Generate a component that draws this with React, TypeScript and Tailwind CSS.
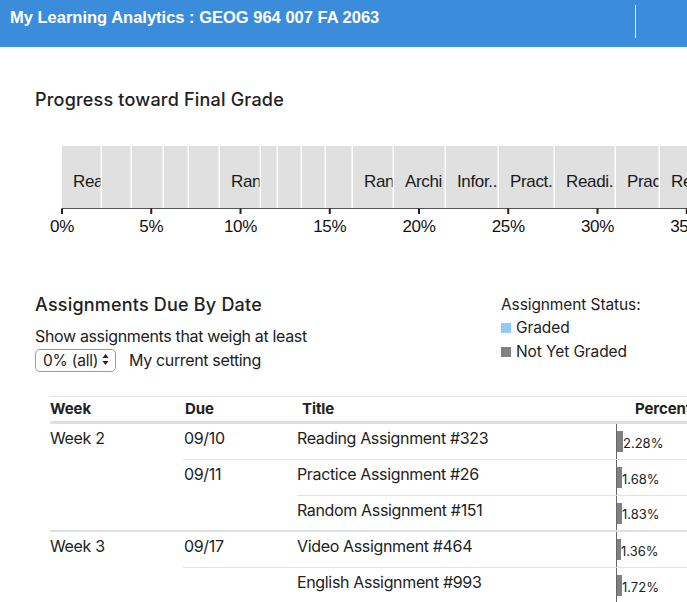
import React from "react";

const bounds = [62, 102, 132, 164, 189, 220, 261, 278, 302, 326, 353, 394, 446, 499, 555, 616, 660, 720];
const labels: Record<number, string> = {
  0: "Reading Assignment",
  5: "Random Assignment",
  10: "Random Assignment",
  11: "Archi",
  12: "Infor..",
  13: "Pract.",
  14: "Readi.",
  15: "Practice Assignment",
  16: "Reading Assignment",
};

function ProgressChart() {
  const ticks = [0, 5, 10, 15, 20, 25, 30, 35];
  return (
    <svg width={687} height={100} className="block" style={{ fontFamily: '"Liberation Sans", Arial, sans-serif' }}>
      <defs>
        {bounds.slice(0, -1).map((x, i) => (
          <clipPath id={`seg${i}`} key={i}>
            <rect x={x} y={0} width={bounds[i + 1] - x - 1.5} height={70} />
          </clipPath>
        ))}
      </defs>
      {bounds.slice(0, -1).map((x, i) => (
        <g key={i}>
          <rect x={x} y={5} width={bounds[i + 1] - x - 1.5} height={62} fill="#e0e0e0" />
          {labels[i] && (
            <text x={x + 11} y={46} fontSize={17} fill="#1a1a1a" clipPath={`url(#seg${i})`}>
              {labels[i]}
            </text>
          )}
        </g>
      ))}
      <line x1={62} x2={687} y1={67.5} y2={67.5} stroke="#555" strokeWidth={1.2} />
      {ticks.map((t) => {
        const x = 62 + t * 17.85;
        return (
          <g key={t}>
            <line x1={x} x2={x} y1={67.5} y2={73} stroke="#222" strokeWidth={2} />
            <text x={x} y={91} fontSize={17} textAnchor="middle" fill="#111">
              {t}%
            </text>
          </g>
        );
      })}
    </svg>
  );
}

type Row = { title: string; pct: number };
type DueGroup = { due: string; rows: Row[] };
type WeekGroup = { week: string; dues: DueGroup[] };

const data: WeekGroup[] = [
  {
    week: "Week 2",
    dues: [
      { due: "09/10", rows: [{ title: "Reading Assignment #323", pct: 2.28 }] },
      {
        due: "09/11",
        rows: [
          { title: "Practice Assignment #26", pct: 1.68 },
          { title: "Random Assignment #151", pct: 1.83 },
        ],
      },
    ],
  },
  {
    week: "Week 3",
    dues: [
      { due: "09/17", rows: [{ title: "Video Assignment #464", pct: 1.36 }] },
      { due: "", rows: [{ title: "English Assignment #993", pct: 1.72 }] },
    ],
  },
];

function Select() {
  return (
    <div className="relative w-[81px] h-[23px]">
      <select
        className="appearance-none w-full h-full border border-[#9a9a9a] rounded-[5px] bg-white pl-[7px] text-[15.5px] text-[#222] leading-[21px] outline-none tracking-[-0.2px]"
        defaultValue="0"
      >
        <option value="0">0% (all)</option>
      </select>
      <svg className="absolute right-[7px] top-[5px] pointer-events-none" width="7" height="13" viewBox="0 0 7 13">
        <path d="M0.5 5 L3.5 1 L6.5 5 Z" fill="#222" />
        <path d="M0.5 8 L3.5 12 L6.5 8 Z" fill="#222" />
      </svg>
    </div>
  );
}

export default function App() {
  const body = { fontFamily: 'Inter, "Noto Sans", sans-serif' };
  return (
    <div className="w-[687px] h-[602px] overflow-hidden bg-white text-[#212121] tracking-[-0.35px]" style={body}>
      <header className="h-[47px] bg-[#3b8ddb] flex items-start">
        <div
          className="pl-[10px] pt-[7px] text-white font-bold text-[16.5px] leading-[20px] tracking-normal"
          style={{ fontFamily: '"Liberation Sans", Arial, sans-serif' }}
        >
          My Learning Analytics : GEOG 964 007 FA 2063
        </div>
        <div className="ml-auto mr-[51px] mt-[5px] w-px h-[33px] bg-white/90" />
      </header>

      <div className="pl-[35px] pt-[42px] text-[18px] leading-[22px] font-medium text-[#222] tracking-[0.2px]">
        Progress toward Final Grade
      </div>
      <div className="mt-[30px]">
        <ProgressChart />
      </div>

      <div className="flex mt-[53px]">
        <div className="pl-[35px] w-[501px] shrink-0">
          <div className="text-[18px] leading-[22px] font-medium text-[#222] tracking-[0.2px]">Assignments Due By Date</div>
          <div className="mt-[10px] text-[16px] leading-[20px] text-[#222]">Show assignments that weigh at least</div>
          <div className="flex items-center gap-[13px] mt-[2px]">
            <Select />
            <span className="text-[16px] leading-[20px] text-[#222]">My current setting</span>
          </div>
        </div>
        <div className="text-[15.5px] leading-[24px] text-[#222] tracking-[-0.1px]">
          <div className="leading-[22px]">Assignment Status:</div>
          <div className="flex items-center gap-[5px]">
            <span className="w-[10px] h-[10px] bg-[#90caf9] inline-block" />
            Graded
          </div>
          <div className="flex items-center gap-[5px]">
            <span className="w-[10px] h-[10px] bg-[#808080] inline-block" />
            Not Yet Graded
          </div>
        </div>
      </div>

      <div className="ml-[50px] mt-[25px] w-[700px] border-t border-[#dfe2e6] text-[16px] text-[#222]">
        <div className="flex h-[27px] items-center font-bold text-[15px] border-b-[3px] border-[#dcdfe3] whitespace-nowrap tracking-[-0.1px] pt-[1px]">
          <div className="w-[133px] shrink-0">Week</div>
          <div className="w-[114px] shrink-0 pl-[2px]">Due</div>
          <div className="w-[319px] shrink-0 pl-[5px]">Title</div>
          <div className="pl-[19px] shrink-0">Percent of Final Grade</div>
        </div>
        {data.map((wg, wi) => (
          <div key={wi} className={`flex ${wi > 0 ? "border-t-2 border-[#dcdfe3]" : ""}`}>
            <div className="w-[133px] shrink-0 pt-[4px] leading-[20px]">{wg.week}</div>
            <div className="flex-1">
              {wg.dues.map((dg, di) => (
                <div key={di} className={`flex ${di > 0 ? "border-t border-[#dfe2e6]" : ""}`}>
                  <div className="w-[114px] shrink-0 pt-[4px] pl-[1px] leading-[20px]">{dg.due}</div>
                  <div className="flex-1">
                    {dg.rows.map((r, ri) => (
                      <div key={ri} className={`flex h-[35px] ${ri > 0 ? "border-t border-[#dfe2e6]" : ""}`}>
                        <div className="w-[319px] shrink-0 pt-[4px] leading-[20px]">{r.title}</div>
                        <div className="border-l border-[#666] flex items-center h-full">
                          <div className="h-[21px] bg-[#808080]" style={{ width: `${Math.round(r.pct * 2.8)}px` }} />
                          <span className="text-[13px] leading-[16px] mt-[2px] tracking-normal">{r.pct.toFixed(2)}%</span>
                        </div>
                      </div>
                    ))}
                  </div>
                </div>
              ))}
            </div>
          </div>
        ))}
      </div>
    </div>
  );
}
